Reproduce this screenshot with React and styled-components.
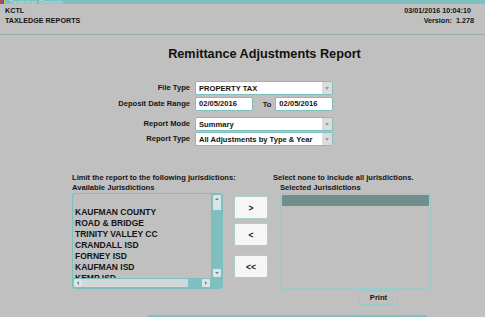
import React from "react"
import styled, { createGlobalStyle } from "styled-components"

const Global = createGlobalStyle`
	html, body {
		margin: 0;
		padding: 0;
		background: #c0c0c0;
	}
	body {
		font-family: "Liberation Sans", Arial, sans-serif;
		font-weight: bold;
		color: #141414;
		width: 485px;
		height: 317px;
		overflow: hidden;
	}
`

const teal = "#7fbfbf"

const Page = styled.div`
	width: 485px;
	height: 317px;
	display: flex;
	flex-direction: column;
	position: relative;
`

const TitleBar = styled.div`
	height: 4px;
	background: ${teal};
	display: flex;
	align-items: flex-end;
	overflow: hidden;
	font-size: 7px;
	color: #b8e0e0;
	font-weight: normal;
	> span { margin-left: 4px; line-height: 3px; }
`

const AppIcon = styled.div`
	width: 5px;
	height: 4px;
	background: linear-gradient(90deg, #d04040 0 2px, #4060c0 2px 4px, #e0c040 4px);
`

const Header = styled.header`
	height: 30px;
	box-sizing: border-box;
	display: flex;
	justify-content: space-between;
	padding: 3px 14px 0 5px;
	font-size: 7.2px;
`

const HeaderCol = styled.div`
	display: flex;
	flex-direction: column;
	align-items: ${p => p.right ? "flex-end" : "flex-start"};
	gap: 2px;
	line-height: 8px;
	span:last-child { margin-right: ${p => p.right ? "-3px" : "0"}; }
`

const Divider = styled.div`
	height: 1px;
	background: #8fb0ad;
	border-bottom: 1px solid #b0c8c6;
`

const Title = styled.h1`
	margin: 9px 0 0 0;
	text-align: center;
	font-size: 12.7px;
	line-height: 18px;
	padding-left: 44px;
	color: #111;
`

const Form = styled.div`
	display: grid;
	grid-template-columns: 190px 138px;
	column-gap: 5px;
	margin-top: 18px;
	font-size: 7.6px;
`

const Label = styled.div`
	text-align: right;
	line-height: 14px;
	margin-top: ${p => p.top || 0}px;
`

const FieldCell = styled.div`
	display: flex;
	align-items: center;
	margin-top: ${p => p.top || 0}px;
`

const Select = styled.div`
	flex: 1;
	height: 14px;
	box-sizing: border-box;
	border: 1px solid ${teal};
	border-radius: 2px;
	background: #fff;
	display: flex;
	align-items: center;
	padding-left: 3px;
	position: relative;
`

const SelectText = styled.span`
	flex: 1;
	white-space: nowrap;
	overflow: hidden;
`

const Arrow = styled.div`
	width: 10px;
	height: 12px;
	background: #dcdcdc;
	display: flex;
	align-items: center;
	justify-content: center;
	&::after {
		content: "";
		border-left: 2.5px solid transparent;
		border-right: 2.5px solid transparent;
		border-top: 3px solid #9a9a9a;
	}
`

const Input = styled.div`
	width: ${p => p.w}px;
	height: 14px;
	box-sizing: border-box;
	border: 1px solid ${teal};
	border-radius: 2px;
	background: #fff;
	padding-left: 3px;
	line-height: 12px;
`

const To = styled.span`
	margin: 0 4px 0 10px;
`

const Juris = styled.div`
	display: flex;
	margin-top: 27px;
	padding-left: 72px;
	font-size: 7.6px;
`

const Column = styled.div`
	display: flex;
	flex-direction: column;
	width: 151px;
`

const Caption = styled.div`
	line-height: 10px;
	white-space: nowrap;
	margin-left: ${p => p.shift || 0}px;
`

const ListBox = styled.div`
	width: 151px;
	height: 96px;
	box-sizing: border-box;
	border: 1px solid ${teal};
	border-radius: 3px;
	display: grid;
	grid-template-columns: 1fr 11px;
	grid-template-rows: 1fr 10px;
	background: #c0c0c0;
	overflow: hidden;
`

const Items = styled.div`
	padding: 13px 0 0 2px;
	font-size: 8.5px;
	overflow: hidden;
	line-height: 11px;
`

const VScroll = styled.div`
	background: ${teal};
	display: flex;
	flex-direction: column;
	align-items: center;
	padding-top: 1px;
`

const ScrollBtn = styled.div`
	width: 8px;
	height: 8px;
	background: #d9e6e6;
	border-radius: 1px;
	display: flex;
	align-items: center;
	justify-content: center;
	margin-top: ${p => p.push ? "auto" : "0"};
	margin-bottom: ${p => p.push ? "1px" : "0"};
	&::after {
		content: "";
		${p => p.dir === "up" && "border-left: 2px solid transparent; border-right: 2px solid transparent; border-bottom: 2px solid #7a7a7a;"}
		${p => p.dir === "down" && "border-left: 2px solid transparent; border-right: 2px solid transparent; border-top: 2px solid #7a7a7a;"}
		${p => p.dir === "left" && "border-top: 2px solid transparent; border-bottom: 2px solid transparent; border-right: 2px solid #7a7a7a;"}
		${p => p.dir === "right" && "border-top: 2px solid transparent; border-bottom: 2px solid transparent; border-left: 2px solid #7a7a7a;"}
	}
`

const HScrollRight = styled(ScrollBtn)`
	margin-left: auto;
	margin-right: 1px;
`

const VThumb = styled.div`
	width: 8px;
	height: 7px;
	background: #d9e6e6;
`

const HScroll = styled.div`
	background: ${teal};
	display: flex;
	align-items: center;
	padding-left: 1px;
`

const HThumb = styled.div`
	width: 106px;
	height: 8px;
	background: #d2d8d8;
`

const Corner = styled.div`
	background: ${teal};
`

const Buttons = styled.div`
	display: flex;
	flex-direction: column;
	margin: 23px 12px 0 11px;
`

const MoveBtn = styled.div`
	width: 34px;
	height: 23px;
	box-sizing: border-box;
	background: #f6f6f6;
	border: 1px solid #a8d0d0;
	border-radius: 2px;
	display: flex;
	align-items: center;
	justify-content: center;
	font-size: 8.5px;
	margin-top: ${p => p.top || 0}px;
`

const Selected = styled.div`
	width: 151px;
	height: 96px;
	box-sizing: border-box;
	border: 1px solid #9cc8c8;
	border-radius: 3px;
	padding: 1px;
`

const Highlight = styled.div`
	height: 11px;
	background: #6e8f8b;
	border-radius: 1px;
`

const PrintBtn = styled.div`
	width: 39px;
	height: 15px;
	box-sizing: border-box;
	border: 1px solid #9cc8c8;
	border-radius: 2px;
	display: flex;
	align-items: center;
	justify-content: center;
	margin: 1px 0 0 79px;
`

const BottomBar = styled.div`
	position: absolute;
	left: 147px;
	bottom: 0;
	width: 280px;
	height: 2px;
	background: ${teal};
	border-radius: 2px 2px 0 0;
`

const jurisdictions = [
	"KAUFMAN COUNTY",
	"ROAD & BRIDGE",
	"TRINITY VALLEY CC",
	"CRANDALL ISD",
	"FORNEY ISD",
	"KAUFMAN ISD",
	"KEMP ISD",
]

export default function App () {
	return <Page>
		<Global />
		<TitleBar><AppIcon /><span>Taxledge Reports</span></TitleBar>
		<Header>
			<HeaderCol>
				<span>KCTL</span>
				<span>TAXLEDGE REPORTS</span>
			</HeaderCol>
			<HeaderCol right>
				<span>03/01/2016 10:04:10</span>
				<span>Version:&nbsp; 1.278</span>
			</HeaderCol>
		</Header>
		<Divider />
		<Title>Remittance Adjustments Report</Title>
		<Form>
			<Label>File Type</Label>
			<FieldCell>
				<Select><SelectText>PROPERTY TAX</SelectText><Arrow /></Select>
			</FieldCell>
			<Label top={2}>Deposit Date Range</Label>
			<FieldCell top={2}>
				<Input w={58}>02/05/2016</Input>
				<To>To</To>
				<Input w={58}>02/05/2016</Input>
			</FieldCell>
			<Label top={6}>Report Mode</Label>
			<FieldCell top={6}>
				<Select><SelectText>Summary</SelectText><Arrow /></Select>
			</FieldCell>
			<Label top={1}>Report Type</Label>
			<FieldCell top={1}>
				<Select><SelectText>All Adjustments by Type &amp; Year</SelectText><Arrow /></Select>
			</FieldCell>
		</Form>
		<Juris>
			<Column>
				<Caption>Limit the report to the following jurisdictions:</Caption>
				<Caption>Available Jurisdictions</Caption>
				<ListBox>
					<Items>
						{jurisdictions.map(j => <div key={j}>{j}</div>)}
					</Items>
					<VScroll>
						<ScrollBtn dir="up" />
						<VThumb />
						<ScrollBtn dir="down" push />
					</VScroll>
					<HScroll>
						<ScrollBtn dir="left" />
						<HThumb />
						<HScrollRight dir="right" />
					</HScroll>
					<Corner />
				</ListBox>
			</Column>
			<Buttons>
				<MoveBtn>&gt;</MoveBtn>
				<MoveBtn top={4}>&lt;</MoveBtn>
				<MoveBtn top={9}>&lt;&lt;</MoveBtn>
			</Buttons>
			<Column>
				<Caption shift={-7}>Select none to include all jurisdictions.</Caption>
				<Caption>Selected Jurisdictions</Caption>
				<Selected><Highlight /></Selected>
				<PrintBtn>Print</PrintBtn>
			</Column>
		</Juris>
		<BottomBar />
	</Page>
}
